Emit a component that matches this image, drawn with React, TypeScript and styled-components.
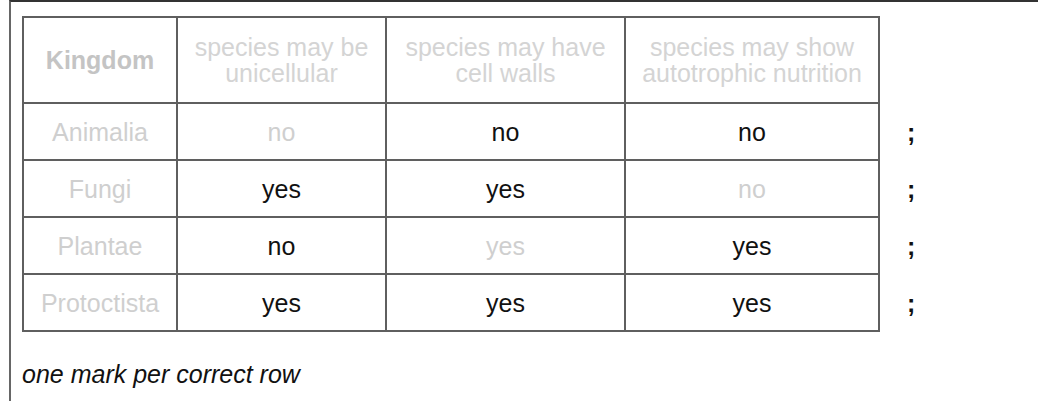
import React from "react";
import styled, { createGlobalStyle } from "styled-components";

const Global = createGlobalStyle`
  html, body { margin: 0; padding: 0; background: #fff; }
  body { font-family: "Liberation Sans", Arial, sans-serif; }
`;

const Frame = styled.div`
  margin-left: 9px;
  height: 401px;
  box-sizing: border-box;
  border-left: 2px solid #666;
  border-top: 2px solid #333;
  padding: 14px 0 0 11px;
`;

const Table = styled.table`
  border-collapse: collapse;
  font-size: 25px;
  line-height: 26px;
`;

const HeadCell = styled.th<{ $w: number; $bold?: boolean }>`
  width: ${(p) => p.$w}px;
  height: 86px;
  box-sizing: border-box;
  border: 2px solid #5f5f5f;
  padding: 0 4px;
  font-weight: ${(p) => (p.$bold ? 700 : 400)};
  color: ${(p) => (p.$bold ? "#c4c4c4" : "#d4d4d4")};
  text-align: center;
  vertical-align: middle;
  white-space: nowrap;
`;

const Cell = styled.td<{ $muted?: boolean }>`
  height: 55px;
  border: 2px solid #5f5f5f;
  padding: 0;
  text-align: center;
  vertical-align: middle;
  color: ${(p) => (p.$muted ? "#cfcfcf" : "#111")};
`;

const MarkCell = styled.td`
  border: none;
  padding: 0 0 0 27px;
  vertical-align: middle;
  color: #111;
  font-weight: 700;
`;

const BlankHead = styled.th`
  border: none;
`;

const Note = styled.p`
  margin: 28px 0 0 0;
  font-style: italic;
  font-size: 25px;
  color: #111;
`;

type Row = { kingdom: string; cells: [string, boolean][] };

const rows: Row[] = [
  { kingdom: "Animalia", cells: [["no", true], ["no", false], ["no", false]] },
  { kingdom: "Fungi", cells: [["yes", false], ["yes", false], ["no", true]] },
  { kingdom: "Plantae", cells: [["no", false], ["yes", true], ["yes", false]] },
  { kingdom: "Protoctista", cells: [["yes", false], ["yes", false], ["yes", false]] },
];

export default function App() {
  return (
    <>
      <Global />
      <Frame>
        <Table>
          <thead>
            <tr>
              <HeadCell $w={154} $bold>Kingdom</HeadCell>
              <HeadCell $w={209}>species may be<br />unicellular</HeadCell>
              <HeadCell $w={239}>species may have<br />cell walls</HeadCell>
              <HeadCell $w={254}>species may show<br />autotrophic nutrition</HeadCell>
              <BlankHead />
            </tr>
          </thead>
          <tbody>
            {rows.map((r) => (
              <tr key={r.kingdom}>
                <Cell $muted>{r.kingdom}</Cell>
                {r.cells.map(([t, m], i) => (
                  <Cell key={i} $muted={m}>{t}</Cell>
                ))}
                <MarkCell>;</MarkCell>
              </tr>
            ))}
          </tbody>
        </Table>
        <Note>one mark per correct row</Note>
      </Frame>
    </>
  );
}
